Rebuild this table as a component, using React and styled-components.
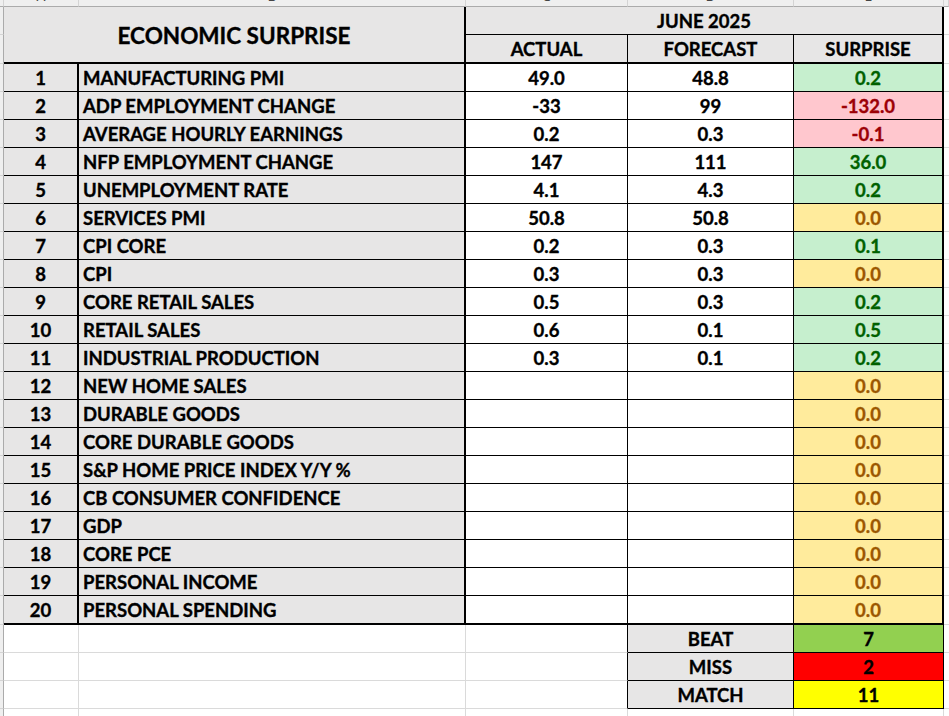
import React from "react";
import styled, { createGlobalStyle } from "styled-components";

const GlobalStyle = createGlobalStyle`
  html, body { margin: 0; padding: 0; background: #fff; overflow: hidden; }
  *, *::before, *::after { box-sizing: border-box; }
`;

const THICK = "2px solid #000";
const THIN = "1px solid #000";
const GRID = "1px solid #dadada";
const HEAD_BG = "#e7e6e6";

const Sheet = styled.div`
  display: grid;
  grid-template-columns: 4px 75px 387px 162px 166px 150px 1fr;
  grid-template-rows: 7px 28px 29px repeat(19, 28px) 29px repeat(3, 28px) 28px;
  width: 949px;
  height: 716px;
  overflow: hidden;
  font-family: Lato, "Open Sans", sans-serif;
  font-weight: 700;
  font-size: 18.5px;
  color: #000;
`;

const Cell = styled.div`
  display: flex;
  align-items: center;
  justify-content: center;
  padding-top: 2px;
  line-height: 1;
  white-space: nowrap;
  overflow: hidden;
  background: #fff;
  -webkit-text-stroke: 0.35px currentColor;
  border-right: ${(p) => p.$right || GRID};
  border-bottom: ${(p) => p.$bottom || GRID};
`;

const ColLetter = styled.div`
  display: flex;
  align-items: flex-end;
  justify-content: center;
  overflow: hidden;
  background: #efefef;
  border-bottom: 1px solid #ababab;
  border-right: 1px solid #d4d4d4;
  font-family: "Noto Sans", sans-serif;
  font-weight: 400;
  font-size: 14px;
  color: #444;
  span {
    display: block;
    line-height: 14px;
    margin-bottom: 3px;
  }
`;

const RowStub = styled.div`
  background: #efefef;
  border-right: 1px solid #ababab;
  border-bottom: 1px solid #d4d4d4;
`;

const Title = styled(Cell)`
  grid-column: 2 / span 2;
  grid-row: 2 / span 2;
  background: ${HEAD_BG};
  font-size: 22.5px;
  padding-top: 3px;
`;

const Month = styled(Cell)`
  grid-column: 4 / span 3;
  background: ${HEAD_BG};
`;

const SubHead = styled(Cell)`
  background: ${HEAD_BG};
`;

const Index = styled(Cell)`
  background: ${HEAD_BG};
`;

const Name = styled(Cell)`
  background: ${HEAD_BG};
  justify-content: flex-start;
  padding-left: 4px;
`;

const Value = styled(Cell)``;

const TONES = {
  beat: { bg: "#c6efce", fg: "#006100" },
  miss: { bg: "#ffc7ce", fg: "#9c0006" },
  flat: { bg: "#ffeb9c", fg: "#9c5700" },
};

const Surprise = styled(Cell)`
  background: ${(p) => TONES[p.$tone].bg};
  color: ${(p) => TONES[p.$tone].fg};
`;

const Blank = styled(Cell)``;

const SummaryLabel = styled(Cell)`
  background: ${HEAD_BG};
`;

const FILLS = { beat: "#92d050", miss: "#ff0000", match: "#ffff00" };

const SummaryValue = styled(Cell)`
  background: ${(p) => FILLS[p.$fill]};
`;

const rows = [
  ["MANUFACTURING PMI", "49.0", "48.8", "0.2", "beat"],
  ["ADP EMPLOYMENT CHANGE", "-33", "99", "-132.0", "miss"],
  ["AVERAGE HOURLY EARNINGS", "0.2", "0.3", "-0.1", "miss"],
  ["NFP EMPLOYMENT CHANGE", "147", "111", "36.0", "beat"],
  ["UNEMPLOYMENT RATE", "4.1", "4.3", "0.2", "beat"],
  ["SERVICES PMI", "50.8", "50.8", "0.0", "flat"],
  ["CPI CORE", "0.2", "0.3", "0.1", "beat"],
  ["CPI", "0.3", "0.3", "0.0", "flat"],
  ["CORE RETAIL SALES", "0.5", "0.3", "0.2", "beat"],
  ["RETAIL SALES", "0.6", "0.1", "0.5", "beat"],
  ["INDUSTRIAL PRODUCTION", "0.3", "0.1", "0.2", "beat"],
  ["NEW HOME SALES", "", "", "0.0", "flat"],
  ["DURABLE GOODS", "", "", "0.0", "flat"],
  ["CORE DURABLE GOODS", "", "", "0.0", "flat"],
  ["S&P HOME PRICE INDEX Y/Y %", "", "", "0.0", "flat"],
  ["CB CONSUMER CONFIDENCE", "", "", "0.0", "flat"],
  ["GDP", "", "", "0.0", "flat"],
  ["CORE PCE", "", "", "0.0", "flat"],
  ["PERSONAL INCOME", "", "", "0.0", "flat"],
  ["PERSONAL SPENDING", "", "", "0.0", "flat"],
];

const summary = [
  ["BEAT", "7", "beat"],
  ["MISS", "2", "miss"],
  ["MATCH", "11", "match"],
];

const letters = ["", "A", "B", "C", "D", "E", ""];

export default function App() {
  return (
    <>
      <GlobalStyle />
      <Sheet>
        {letters.map((l, i) => (
          <ColLetter key={"l" + i}>
            <span>{l}</span>
          </ColLetter>
        ))}

        <RowStub />
        <Title $right={THICK} $bottom={THICK}>ECONOMIC SURPRISE</Title>
        <Month $right={THICK} $bottom={THIN}>JUNE 2025</Month>
        <Blank $right="none" />

        <RowStub />
        <SubHead $right={THIN} $bottom={THICK}>ACTUAL</SubHead>
        <SubHead $right={THIN} $bottom={THICK}>FORECAST</SubHead>
        <SubHead $right={THICK} $bottom={THICK}>SURPRISE</SubHead>
        <Blank $right="none" />

        {rows.map(([name, actual, forecast, surprise, tone], i) => {
          const bottom = i === rows.length - 1 ? THICK : THIN;
          return (
            <React.Fragment key={name}>
              <RowStub />
              <Index $right={THICK} $bottom={bottom}>{i + 1}</Index>
              <Name $right={THICK} $bottom={bottom}>{name}</Name>
              <Value $right={THIN} $bottom={bottom}>{actual}</Value>
              <Value $right={THIN} $bottom={bottom}>{forecast}</Value>
              <Surprise $tone={tone} $right={THICK} $bottom={bottom}>{surprise}</Surprise>
              <Blank $right="none" />
            </React.Fragment>
          );
        })}

        {summary.map(([label, value, fill]) => (
          <React.Fragment key={label}>
            <RowStub />
            <Blank />
            <Blank />
            <Blank $right={THIN} />
            <SummaryLabel $right={THIN} $bottom={THIN}>{label}</SummaryLabel>
            <SummaryValue $fill={fill} $right={THIN} $bottom={THIN}>{value}</SummaryValue>
            <Blank $right="none" />
          </React.Fragment>
        ))}

        <RowStub />
        <Blank />
        <Blank />
        <Blank />
        <Blank />
        <Blank />
        <Blank $right="none" />
      </Sheet>
    </>
  );
}
